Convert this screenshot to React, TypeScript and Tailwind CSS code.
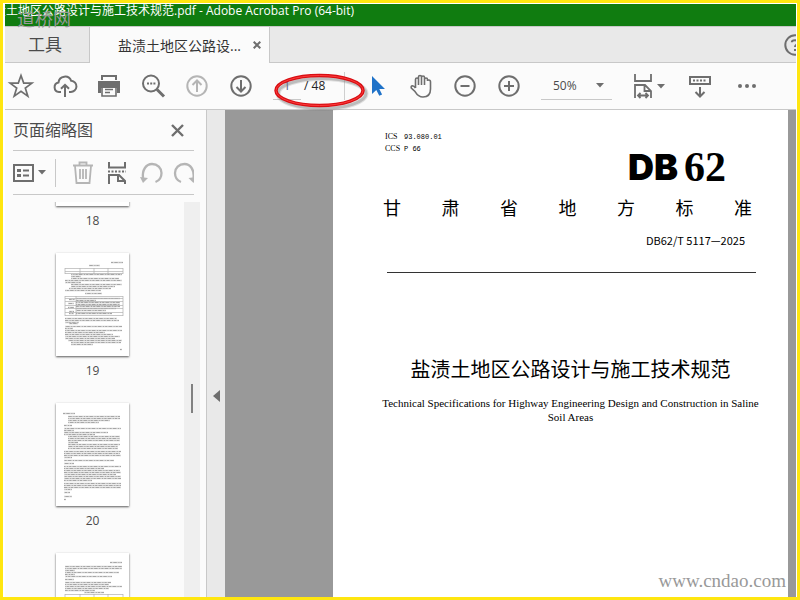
import { useState } from "react";
import type { ReactNode } from "react";

type Line = [x: number, y: number, w: number];

type Page = { number: number; lines: Line[]; tables: { y: number; rows: number[]; cols: number[] }[] };

const pages: Page[] = [
  { number: 18, lines: [], tables: [] },
  {
    number: 19,
    lines: [
      [55, 9, 12], [33, 12, 11],
      [15, 21, 51], [15, 23, 10], [15, 25, 48], [9, 27, 57], [9, 29, 16], [15, 31, 51], [15, 33, 44], [13, 35, 42], [9, 37, 36],
      [29, 40, 17], [13, 46, 6], [20, 45, 44], [20, 47, 20], [12, 50, 6], [20, 49, 44], [20, 51, 44], [12, 54, 6], [20, 53, 44], [20, 55, 40], [13, 58, 5], [20, 57, 30], [13, 60, 5], [20, 60, 36],
      [9, 65, 52], [9, 67, 54], [9, 69, 14], [13, 70, 9], [9, 73, 57], [9, 75, 8], [9, 77, 57], [9, 79, 40], [9, 81, 48], [9, 83, 55], [9, 85, 50], [12, 87, 54], [15, 89, 50], [15, 91, 22], [64, 96, 2],
    ],
    tables: [
      { y: 15, rows: [0, 3, 5], cols: [9, 24, 38, 52, 67] },
      { y: 43, rows: [0, 2, 5, 9, 12, 16, 19], cols: [9, 20, 67] },
    ],
  },
  {
    number: 20,
    lines: [
      [7, 10, 12], [12, 13, 52], [12, 15, 52], [12, 17, 42], [12, 19, 31], [8, 22, 8],
      [8, 25, 57], [8, 27, 10], [8, 29, 44], [8, 31, 31], [12, 33, 52], [12, 35, 52], [12, 37, 52], [12, 39, 10], [12, 41, 52], [12, 43, 50], [12, 45, 50], [8, 48, 57], [8, 50, 56], [8, 52, 57], [8, 54, 8], [8, 57, 50],
      [8, 60, 10], [8, 63, 57], [8, 65, 40], [8, 67, 56], [8, 69, 57], [8, 71, 52], [8, 73, 57], [8, 75, 57], [8, 77, 28], [8, 80, 57], [8, 82, 57], [8, 84, 57], [8, 86, 8], [8, 89, 6], [8, 93, 8], [8, 96, 2],
    ],
    tables: [],
  },
  {
    number: 21,
    lines: [
      [54, 9, 12], [9, 13, 57], [9, 15, 57], [9, 17, 10], [9, 19, 54], [9, 21, 10], [9, 23, 47], [9, 26, 9], [9, 29, 46], [9, 31, 44], [9, 33, 57], [9, 35, 44], [9, 37, 30], [28, 39, 20],
    ],
    tables: [{ y: 41, rows: [0, 3, 6], cols: [9, 24, 38, 52, 67] }],
  },
];

function Icon({ children }: { children: ReactNode }) {
  return (
    <svg viewBox="0 0 28 28" className="size-7 shrink-0" fill="none" stroke="currentColor" strokeWidth="2" aria-hidden="true">
      {children}
    </svg>
  );
}

function Tool({ label, className = "text-[#6e6e6e]", children }: { label: string; className?: string; children: ReactNode }) {
  return (
    <button type="button" aria-label={label} className={`flex h-7 w-7 shrink-0 items-center justify-center ${className}`}>
      <Icon>{children}</Icon>
    </button>
  );
}

function Caret() {
  return (
    <svg viewBox="0 0 8 5" className="h-[5px] w-2 shrink-0" fill="#6e6e6e" aria-hidden="true">
      <path d="M0 0h8L4 4.6z" />
    </svg>
  );
}

function Thumbnail({ page }: { page: Page }) {
  return (
    <button type="button" aria-label={`${page.number}`} className="block h-[103px] w-[73px] bg-white shadow-[0_1px_2px_rgba(0,0,0,0.65)]">
      <svg viewBox="0 0 73 103" className="block size-full" fill="none" aria-hidden="true">
        {page.lines.map(([x, y, w], i) => (
          <g key={i}>
            <path d={`M${x} ${y + 0.5}h${w}`} stroke="#d2d2d2" strokeWidth="1.6" />
            <path d={`M${x} ${y + 0.5}h${w}`} stroke="#a6a6a6" strokeDasharray="2 1.4 3.3 1.7 1 1.2" strokeDashoffset={i * 3} />
          </g>
        ))}
        {page.tables.map((t) => (
          <g key={t.y} stroke="#b0b0b0" strokeWidth="0.7">
            {t.rows.map((r) => (
              <path key={r} d={`M${t.cols[0]} ${t.y + r + 0.5}H${t.cols[t.cols.length - 1]}`} />
            ))}
            {t.cols.map((c) => (
              <path key={c} d={`M${c} ${t.y}v${t.rows[t.rows.length - 1] + 1}`} />
            ))}
          </g>
        ))}
      </svg>
    </button>
  );
}

function TitleBar() {
  return (
    <header className="relative h-[22px] shrink-0 bg-[#107c10]">
      <div className="flex h-[18px] overflow-hidden">
        <h1 className="-ml-[23px] text-[12px] leading-[14px] whitespace-nowrap text-white">盐渍土地区公路设计与施工技术规范.pdf - Adobe Acrobat Pro (64-bit)</h1>
      </div>
      <span className="absolute top-1.5 left-3 z-10 font-['Liberation_Serif','Noto_Sans_CJK_SC',serif] text-[18px] leading-5 text-[#999]">道桥网</span>
    </header>
  );
}

function TabBar() {
  return (
    <nav className="flex h-[37px] shrink-0 border-t border-[#c8c8c8] bg-[#e9e9e9] text-[#4b4b4b]">
      <button type="button" className="w-[85px] border-r border-b border-[#c8c8c8] pr-1 text-[17px] leading-6">工具</button>
      <div className="flex w-[180px] items-center justify-between border-r border-[#c8c8c8] bg-[#fbfbfb] pr-2 pl-7">
        <button type="button" className="text-[14px] whitespace-nowrap text-[#333]">盐渍土地区公路设...</button>
        <button type="button" aria-label="关闭标签" className="text-[#6e6e6e]">
          <svg viewBox="0 0 8 8" className="size-2" stroke="currentColor" strokeWidth="2" aria-hidden="true"><path d="M.7.7l6.6 6.6M7.3.7L.7 7.3" /></svg>
        </button>
      </div>
      <div className="flex flex-1 items-center justify-end overflow-hidden border-b border-[#c8c8c8]">
        <button type="button" aria-label="帮助" className="-mr-2.5 text-[#6e6e6e]">
          <svg viewBox="0 0 22 22" className="size-[22px]" fill="none" stroke="currentColor" strokeWidth="2" aria-hidden="true">
            <circle cx="11" cy="11" r="9.7" />
            <path d="M7.8 8.3q0-2 3.2-2t3.2 2.2c0 2-3.2 2-3.2 4.6M11 15v2" />
          </svg>
        </button>
      </div>
    </nav>
  );
}

function Toolbar() {
  const [page, setPage] = useState("1");
  return (
    <div className="flex h-[47px] shrink-0 items-center border-b border-[#c8c8c8] bg-[#fbfbfb] pl-0.5">
      <div className="flex gap-4">
        <Tool label="收藏"><path d="M14 3.5l2.7 7.6h8.2l-6.6 5 2.5 8-6.8-4.8-6.8 4.8 2.5-8-6.6-5h8.2z" strokeWidth="1.7" /></Tool>
        <Tool label="上传"><path d="M10 20H8a4.8 4.8 0 01-.5-9.5 6.6 6.6 0 0112.7-1.7A5.6 5.6 0 0119.5 20H18M14 25V13M10 16.8l4-4 4 4" /></Tool>
        <Tool label="打印">
          <path d="M7 8V4h14v4" /><path d="M3 9h22v12h-3v-5H6v5H3z" fill="currentColor" stroke="none" /><path d="M7 15v9h14v-9M10 17.5h8M10 20.5h5" strokeWidth="1.6" />
        </Tool>
        <Tool label="查找"><circle cx="12" cy="11.5" r="8" /><path d="M18 17.5l7 7" strokeWidth="3" /><path d="M8 11.5h2M11.2 11.5h2M14.4 11.5h2" /></Tool>
        <Tool label="上一页" className="text-[#b5b5b5]"><circle cx="14" cy="14" r="9.7" /><path d="M14 20V9M9.5 13L14 8.5l4.5 4.5" /></Tool>
        <Tool label="下一页"><circle cx="14" cy="14" r="9.7" /><path d="M14 8v11M9.5 15l4.5 4.5 4.5-4.5" /></Tool>
      </div>
      <div className="relative ml-[18px] flex h-7 w-[72px] items-center border-r border-[#cfcfcf] text-[12px]">
        <input aria-label="页码" value={page} onChange={(e) => setPage(e.target.value)} className="h-7 w-7 border-b border-[#c8c8c8] bg-transparent text-center text-[#5a5a8a] outline-none" />
        <span className="ml-[3px] whitespace-nowrap text-[#222]">/ 48</span>
        <svg viewBox="0 0 100 42" className="pointer-events-none absolute top-0 -left-1 z-10 h-[42px] w-[100px] max-w-none" fill="none" aria-hidden="true">
          <ellipse cx="53" cy="21.5" rx="44" ry="15" stroke="#777" strokeOpacity=".2" strokeWidth="5" />
          <ellipse cx="53" cy="21.5" rx="44" ry="15" stroke="#777" strokeOpacity=".35" strokeWidth="3" />
          <ellipse cx="50.5" cy="18.5" rx="43.5" ry="15" stroke="#d80f14" strokeWidth="3.5" />
          <ellipse cx="50.5" cy="18.5" rx="43.5" ry="15" stroke="#ff3b3b" />
        </svg>
      </div>
      <div className="ml-[18px] flex gap-4">
        <Tool label="选择" className="text-[#1f72c8]"><path d="M9 4v18l4.3-4 3 5.8 2.8-1.3-2.8-5.5H22z" fill="currentColor" stroke="none" /></Tool>
        <Tool label="手形"><path d="M8.5 16V7.5a1.5 1.5 0 013 0V13M11.5 13V5a1.5 1.5 0 013 0v8M14.5 13V5.5a1.5 1.5 0 013 0V13M17.5 13V7.5q0-1.5 1.5-1.5t1.5 1.500V9q0-1 1.200-1 1.800 0 1.800 2v7q0 8-7.500 8c-5 0-6.500-3-8-5.500L4.300 16q-.6-2 1.200-2.200 1.500 0 3 2.200" strokeWidth="1.6" /></Tool>
        <Tool label="缩小"><circle cx="14" cy="14" r="9.7" /><path d="M9.5 14h9" /></Tool>
        <Tool label="放大"><circle cx="14" cy="14" r="9.7" /><path d="M9 14h10M14 9v10" /></Tool>
      </div>
      <div className="ml-[18px] flex h-7 w-[71px] items-center justify-between border-b border-[#c8c8c8] pr-2 text-[12px]">
        <select aria-label="缩放比例" defaultValue="50%" className="h-7 w-full appearance-none bg-transparent pl-3 text-[#4b4b4b] outline-none">
          <option>50%</option>
          <option>75%</option>
          <option>100%</option>
        </select>
        <Caret />
      </div>
      <button type="button" aria-label="适合宽度" className="ml-[17px] flex w-9 items-center text-[#6e6e6e]">
        <Icon>
          <path d="M6 2v7h16V2M6 26V13h10l6 6v7M15.5 13v6H22M9 23.5h10M11.5 21L9 23.5l2.5 2.5M16.5 21l2.5 2.5-2.5 2.5" strokeWidth="1.8" />
        </Icon>
        <Caret />
      </button>
      <div className="ml-[21px] flex gap-5">
        <Tool label="工具栏显示">
          <path d="M4 5h20v7H4zM14 15v9M9.5 20l4.5 4.5 4.5-4.5" /><path d="M7 8.5h14" strokeDasharray="2 1.5" />
        </Tool>
        <Tool label="更多">
          <g fill="currentColor" stroke="none"><circle cx="6" cy="14" r="2" /><circle cx="13" cy="14" r="2" /><circle cx="20" cy="14" r="2" /></g>
        </Tool>
      </div>
    </div>
  );
}

function Sidebar() {
  return (
    <aside className="flex w-[202px] shrink-0 flex-col border-r border-[#c8c8c8] bg-[#fbfbfb] text-[#4b4b4b]">
      <div className="mr-3 ml-2 flex h-[41px] shrink-0 items-center justify-between border-b border-[#c8c8c8] pr-2.5">
        <h2 className="text-[16px] leading-6">页面缩略图</h2>
        <button type="button" aria-label="关闭" className="text-[#6e6e6e]">
          <svg viewBox="0 0 13 13" className="size-[13px]" stroke="currentColor" strokeWidth="2.4" aria-hidden="true"><path d="M1 1l11 11M12 1L1 12" /></svg>
        </button>
      </div>
      <div className="mr-3 ml-2 flex h-11 shrink-0 items-center overflow-hidden border-b border-[#c8c8c8]">
        <button type="button" aria-label="选项" className="flex w-[34px] shrink-0 items-center gap-1 text-[#6e6e6e]">
          <svg viewBox="0 0 21 18" className="h-[18px] w-[21px]" fill="none" stroke="currentColor" strokeWidth="2" aria-hidden="true">
            <path d="M1 1h19v16H1zM10 6.5h6M10 11.5h6" /><path d="M4 6.5h4M4 11.5h4" strokeWidth="3" />
          </svg>
          <Caret />
        </button>
        <span className="ml-2 h-7 border-l border-[#c8c8c8]" />
        <div className="ml-[13px] flex shrink-0 gap-[6px]">
          <Tool label="删除" className="text-[#b5b5b5]"><path d="M4 6.5h20M10.5 6V3.5h7V6M6 7l1.5 17h13L22 7M11 10v10M14 10v10M17 10v10" strokeWidth="1.8" /></Tool>
          <Tool label="拆分"><path d="M6 3v5.5h16V3M6 25v-9h10l6 6v3M15 16v6h7" /><path d="M5 12.5h18" strokeDasharray="2 1.5" /></Tool>
          <Tool label="逆时针旋转" className="text-[#b5b5b5]"><path d="M6 19C5 11 9 5 15 5c5.5 0 9.5 4 9.5 9s-2 7.5-6 9" strokeWidth="2.3" /><path d="M3 18l8 1-5 5z" fill="currentColor" stroke="none" /></Tool>
          <Tool label="顺时针旋转" className="text-[#b5b5b5]"><path d="M10 23c-4-1.500-6-4-6-9s4-9 9.500-9C19.500 5 23.500 11 22.500 19" strokeWidth="2.3" /><path d="M17.500 19l8-1-3 6z" fill="currentColor" stroke="none" /></Tool>
        </div>
      </div>
      <div className="mt-[7px] mr-1.5 flex min-h-0 flex-1">
        <ul className="-mt-2 min-w-0 flex-1 overflow-hidden pt-2 pr-1 [clip-path:inset(8px_0_0_0)]">
          {pages.map((page) => (
            <li key={page.number} className="flex h-[150px] flex-col items-center first:-mt-[99px]">
              <Thumbnail page={page} />
              <span className="mt-[5px] text-[12px] leading-5">{page.number}</span>
            </li>
          ))}
        </ul>
        <div className="flex w-4 shrink-0 flex-col items-center bg-[#efefef] pt-[182px]">
          <span className="h-[29px] w-0.5 bg-[#808080]" />
        </div>
      </div>
    </aside>
  );
}

function Document() {
  return (
    <main className="flex min-w-0 flex-1 bg-[#999] pr-2 pl-[108px]">
      <article className="relative flex min-w-0 flex-1 flex-col bg-white pr-8 pl-[52px] text-black">
        <div className="grid grid-cols-[19px_1fr] pt-[21px] font-['Liberation_Serif',serif] text-[8px] leading-3">
          <span>ICS</span><span className="font-['Liberation_Mono',monospace] text-[7px]">93.080.01</span>
          <span>CCS</span><span className="font-['Liberation_Mono',monospace] text-[7px]">P 66</span>
        </div>
        <div className="mr-[30px] -mt-2 flex h-10 items-center justify-end gap-1.5">
          <span className="font-['Inter',sans-serif] text-[36px] leading-10 font-black">DB</span>
          <span className="font-['Liberation_Serif',serif] text-[42px] leading-10 font-bold">62</span>
        </div>
        <h2 className="mt-[9px] -mr-0.5 -ml-0.5 flex justify-between pr-1.5 text-[18px] leading-6">
          {["甘", "肃", "省", "地", "方", "标", "准"].map((c) => (
            <span key={c}>{c}</span>
          ))}
        </h2>
        <p className="mt-2.5 mr-[11px] text-right font-['Noto_Sans_CJK_SC',sans-serif] text-[11px] leading-5">DB62/T 5117—2025</p>
        <hr className="mt-[22px] ml-0.5 border-[#333]" />
        <h1 className="mt-[83px] text-center text-[20px] leading-7 whitespace-nowrap">盐渍土地区公路设计与施工技术规范</h1>
        <p className="-mx-3 mt-3 text-center font-['Liberation_Serif',serif] text-[11px] leading-[14px]">Technical Specifications for Highway Engineering Design and Construction in Saline Soil Areas</p>
        <span className="absolute right-0.5 bottom-1 font-['Liberation_Serif',serif] text-[19px] leading-6 text-[#999]">www.cndao.com</span>
      </article>
    </main>
  );
}

export default function App() {
  return (
    <div className="h-screen w-full border-[3px] border-[#ffe610] bg-white font-['Open_Sans','Noto_Sans_CJK_SC',sans-serif]">
      <div className="flex h-full flex-col overflow-hidden pt-px pr-px pl-0.5">
        <TitleBar />
        <TabBar />
        <Toolbar />
        <div className="flex min-h-0 flex-1">
          <Sidebar />
          <button type="button" aria-label="折叠面板" className="flex w-[18px] shrink-0 justify-center bg-[#e9e9e9] pt-[280px]">
            <svg viewBox="0 0 7 12" className="h-3 w-[7px]" fill="#6e6e6e" aria-hidden="true"><path d="M7 0v12L0 6z" /></svg>
          </button>
          <Document />
        </div>
      </div>
    </div>
  );
}
